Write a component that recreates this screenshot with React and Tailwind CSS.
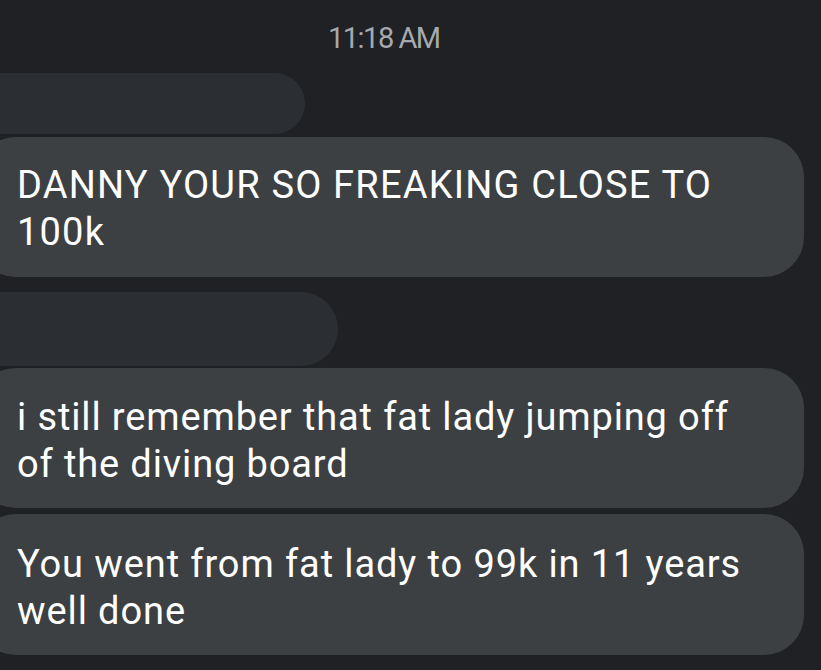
export default function App() {
  return (
    <div
      className="w-[821px] h-[670px] overflow-hidden bg-[#202124] flex flex-col"
      style={{ fontFamily: 'Roboto, "Noto Sans", sans-serif' }}
    >
      <div className="pt-[23px] pl-[328px] text-[29px] leading-[30px] tracking-[-1.5px] text-[#a6a9ad]">
        11:18 AM
      </div>

      <div className="mt-[20px] ml-[-40px] w-[345px] h-[61px] shrink-0 rounded-full bg-[#2b2f33]" />

      <div className="mt-[3px] ml-[-24px] w-[828px] h-[140px] shrink-0 rounded-[40px] bg-[#3c4043] pl-[41px] pt-[25px] text-[38px] leading-[47px] tracking-[1.2px] text-white">
        DANNY YOUR SO FREAKING CLOSE TO
        <br />
        100k
      </div>

      <div className="mt-[15px] ml-[-40px] w-[378px] h-[74px] shrink-0 rounded-full bg-[#2b2f33]" />

      <div className="mt-[2px] ml-[-24px] w-[828px] h-[140px] shrink-0 rounded-[40px] bg-[#3c4043] pl-[41px] pt-[26px] text-[38px] leading-[47px] tracking-[0.87px] text-white">
        i still remember that fat lady jumping off
        <br />
        of the diving board
      </div>

      <div className="mt-[6px] ml-[-24px] w-[828px] h-[141px] shrink-0 rounded-[40px] bg-[#3c4043] pl-[41px] pt-[27px] text-[38px] leading-[47px] tracking-[0.9px] text-white">
        You went from fat lady to 99k in 11 years
        <br />
        well done
      </div>
    </div>
  );
}
